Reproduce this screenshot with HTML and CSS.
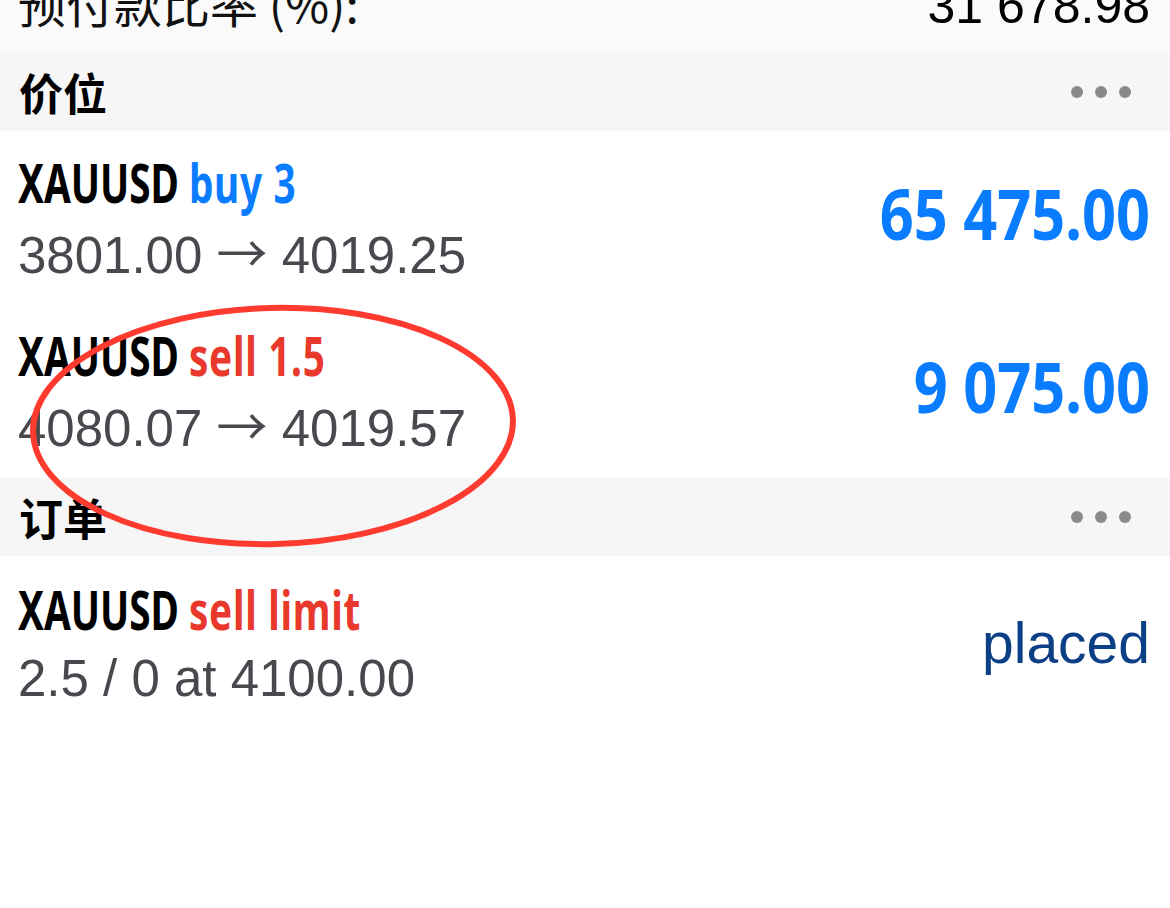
FILE: index.html
```html
<!DOCTYPE html>
<html lang="zh-CN">
<head>
    <meta charset="UTF-8">
    <meta name="viewport" content="width=device-width, initial-scale=1.0">
    <title>交易</title>
    <link rel="stylesheet" href="styles.css">
</head>
<body>
    <div class="screen">
        <div class="summary">
            <span class="summary-label">预付款比率 (%):</span>
            <span class="summary-value">31 678.98</span>
        </div>

        <div class="section-head">
            <span class="section-title">价位</span>
            <span class="more"><i></i><i></i><i></i></span>
        </div>

        <div class="row">
            <div class="row-main">
                <div class="row-title">XAUUSD <span class="buy">buy 3</span></div>
                <div class="row-sub">3801.00 <span class="arrow">→</span> 4019.25</div>
            </div>
            <div class="row-amount">65 475.00</div>
        </div>

        <div class="row">
            <div class="row-main">
                <div class="row-title">XAUUSD <span class="sell">sell 1.5</span></div>
                <div class="row-sub">4080.07 <span class="arrow">→</span> 4019.57</div>
            </div>
            <div class="row-amount">9 075.00</div>
        </div>

        <div class="section-head section-head-orders">
            <span class="section-title">订单</span>
            <span class="more"><i></i><i></i><i></i></span>
        </div>

        <div class="row">
            <div class="row-main">
                <div class="row-title">XAUUSD <span class="sell">sell limit</span></div>
                <div class="row-sub">2.5 / 0 at 4100.00</div>
            </div>
            <div class="row-status">placed</div>
        </div>

        <!-- hand-drawn highlight over the sell position -->
        <svg class="mark" width="1170" height="908" viewBox="0 0 1170 908">
            <ellipse cx="273" cy="426" rx="240" ry="118" transform="rotate(-1.5 273 426)"
                     fill="none" stroke="#ff3b30" stroke-width="6"/>
        </svg>
    </div>
</body>
</html>
```

FILE: styles.css
```css
html, body {
    margin: 0;
    padding: 0;
    background-color: #ffffff;
}

body {
    font-family: 'Liberation Sans', 'Noto Sans CJK SC', sans-serif;
    color: #000;
    overflow: hidden;
}

.screen {
    position: relative;
    width: 1170px;
    height: 908px;
    overflow: hidden;
}

.summary {
    display: flex;
    justify-content: space-between;
    align-items: flex-start;
    height: 52px;
    padding: 0 20px 0 18px;
    background-color: #fafafa;
    overflow: hidden;
    font-size: 50px;
    line-height: 50px;
}

.summary-label {
    font-family: 'Noto Sans CJK SC', sans-serif;
    font-size: 48px;
    color: #111;
    margin-top: -23px;
}

.summary-value {
    margin-top: -19px;
}

.section-head {
    display: flex;
    justify-content: space-between;
    align-items: center;
    height: 79px;
    padding: 0 39px 0 19px;
    background-color: #f6f6f6;
}

.section-head-orders {
    height: 78px;
}

.section-title {
    font-family: 'Noto Sans CJK SC', sans-serif;
    font-weight: bold;
    font-size: 44px;
    line-height: 44px;
}

.more {
    display: flex;
    gap: 12px;
}

.more i {
    display: block;
    width: 12px;
    height: 12px;
    border-radius: 50%;
    background-color: #8a8a8a;
}

.row {
    display: flex;
    justify-content: space-between;
    align-items: center;
    height: 173.5px;
    box-sizing: border-box;
    padding: 0 20px 0 18px;
    background-color: #ffffff;
}

/* no condensed face installed, so the bold titles are narrowed by hand */
.row-title {
    font-family: 'Noto Sans', sans-serif;
    font-weight: bold;
    font-size: 53px;
    line-height: 71px;
    transform: scaleX(0.73);
    transform-origin: left center;
    margin-top: 2px;
    margin-bottom: -2px;
}

.buy,
.sell {
    letter-spacing: 1px;
}

.buy {
    color: #0a7cff;
}

.sell {
    color: #e8392c;
}

.row-sub {
    font-size: 51px;
    line-height: 71px;
    color: #48484e;
}

.arrow {
    font-family: 'Noto Sans CJK SC', sans-serif;
}

.row-amount {
    font-family: 'Noto Sans', sans-serif;
    font-weight: bold;
    font-size: 70px;
    color: #0a7cff;
    transform: scaleX(0.85);
    transform-origin: right center;
    margin-bottom: 10px;
}

.row-status {
    font-size: 57px;
    color: #0b3f86;
}

.mark {
    position: absolute;
    left: 0;
    top: 0;
    pointer-events: none;
}
```
